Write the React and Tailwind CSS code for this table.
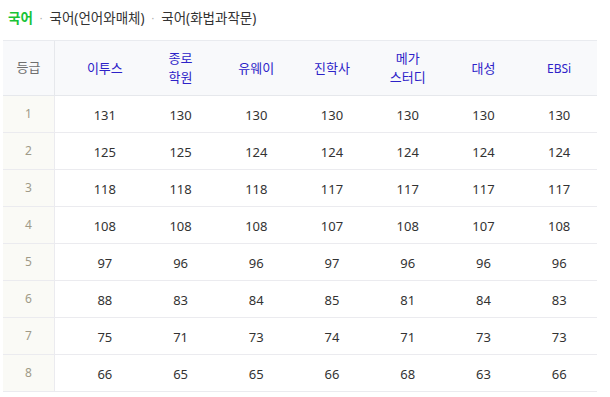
import React from 'react';

const companies = [
  { key: 'etoos', lines: ['이투스'] },
  { key: 'jongro', lines: ['종로', '학원'] },
  { key: 'uway', lines: ['유웨이'] },
  { key: 'jinhak', lines: ['진학사'] },
  { key: 'mega', lines: ['메가', '스터디'] },
  { key: 'daesung', lines: ['대성'] },
  { key: 'ebsi', lines: ['EBSi'], small: true },
];

const rows = [
  [131, 130, 130, 130, 130, 130, 130],
  [125, 125, 124, 124, 124, 124, 124],
  [118, 118, 118, 117, 117, 117, 117],
  [108, 108, 108, 107, 108, 107, 108],
  [97, 96, 96, 97, 96, 96, 96],
  [88, 83, 84, 85, 81, 84, 83],
  [75, 71, 73, 74, 71, 73, 73],
  [66, 65, 65, 66, 68, 63, 66],
];

const tabs = ['국어', '국어(언어와매체)', '국어(화법과작문)'];

function App() {
  return (
    <div className="w-[610px] h-[397px] bg-white overflow-hidden font-['Noto_Sans','Noto_Sans_CJK_KR',sans-serif]">
      {/* subject tabs */}
      <div className="flex items-center h-[36px] pl-[8px] text-[13.5px]">
        {tabs.map((t, i) => (
          <React.Fragment key={t}>
            {i > 0 && <span className="mx-[7px] text-[#aaa] text-[10px]">·</span>}
            <span className={i === 0 ? 'text-[#19c337] font-bold' : 'text-[#333]'}>{t}</span>
          </React.Fragment>
        ))}
      </div>

      <div className="ml-[3px] mt-[4px] w-[594px] border-t border-[#e9ebef]">
        {/* header */}
        <div className="flex h-[55px] bg-[#f8f9fb] border-b border-[#e6e8ec]">
          <div className="w-[52px] border-r border-[#e6e8ec] flex items-center justify-center text-[13px] text-[#6f6f6f]">
            등급
          </div>
          <div className="flex-1 pl-[12px] grid grid-cols-7">
            {companies.map(c => (
              <div
                key={c.key}
                className={`flex flex-col items-center justify-center leading-[19px] text-[#2d22c8] ${c.small ? 'text-[12px]' : 'text-[13px]'}`}
              >
                {c.lines.map(l => <span key={l}>{l}</span>)}
              </div>
            ))}
          </div>
        </div>

        {/* body */}
        {rows.map((r, i) => (
          <div key={i} className="flex h-[37px] border-b border-[#ebebef]">
            <div className="w-[52px] bg-[#fafaf6] border-r border-[#ebebef] flex items-center justify-center text-[12px] text-[#a09a88]">
              {i + 1}
            </div>
            <div className="flex-1 pl-[12px] grid grid-cols-7">
              {r.map((v, j) => (
                <div key={j} className="flex items-center justify-center pt-[3px] text-[13px] text-[#333]">
                  {v}
                </div>
              ))}
            </div>
          </div>
        ))}
      </div>
    </div>
  );
}

export default App;
